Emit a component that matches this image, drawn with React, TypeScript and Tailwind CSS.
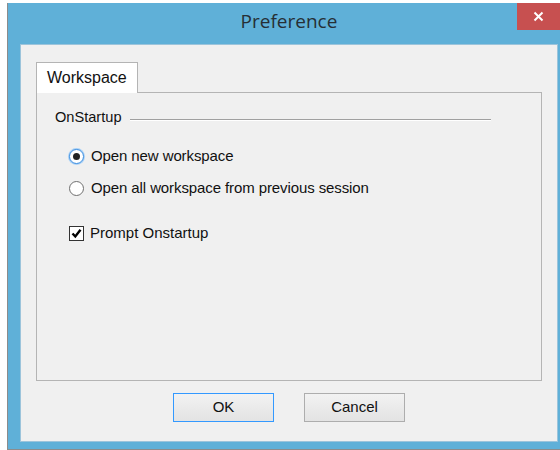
import { useState } from 'react';

const uiFont = { fontFamily: '"Liberation Sans", Arial, sans-serif' };

function Radio({ checked, focused, label, onSelect }: { checked: boolean; focused?: boolean; label: string; onSelect: () => void }) {
  return (
    <label className="flex items-center h-5 cursor-default" onClick={onSelect}>
      <span
        className={
          focused
            ? 'flex items-center justify-center w-[15px] h-[15px] rounded-full border border-[#3d8ee0] bg-white shadow-[0_0_0_1px_#a8d0f5]'
            : 'flex items-center justify-center w-[15px] h-[15px] rounded-full border border-[#6f6f6f] bg-white'
        }
      >
        {checked && <span className="w-[7px] h-[7px] rounded-full bg-[#222]" />}
      </span>
      <span className="ml-[7px] text-[15px] tracking-[-0.1px] text-[#111]">{label}</span>
    </label>
  );
}

function Checkbox({ checked, label, onToggle }: { checked: boolean; label: string; onToggle: () => void }) {
  return (
    <label className="flex items-center h-5 cursor-default" onClick={onToggle}>
      <span className="flex items-center justify-center w-[15px] h-[15px] border border-[#333] bg-white">
        {checked && (
          <svg width="11" height="11" viewBox="0 0 11 11">
            <path d="M1.5 5.5 L4.3 8.5 L9.5 1.8" fill="none" stroke="#000" strokeWidth="2.4" />
          </svg>
        )}
      </span>
      <span className="ml-[6px] text-[15px] text-[#111]">{label}</span>
    </label>
  );
}

export default function App() {
  const [startup, setStartup] = useState<'new' | 'all'>('new');
  const [prompt, setPrompt] = useState(true);

  return (
    <div className="w-[560px] h-[450px] bg-white overflow-hidden" style={uiFont}>
      <div className="ml-[7px] mt-[3px] w-[563px] h-[447px] flex flex-col bg-[#5fb0d8] border-l border-[#8c8c8c] border-b">
        {/* title bar */}
        <div className="relative h-[41px] shrink-0 flex items-center justify-center">
          <span className="text-[19px] text-[#262f35] -mt-[4px]" style={{ fontFamily: '"Open Sans", "Noto Sans", sans-serif' }}>
            Preference
          </span>
          <button className="absolute top-0 right-[10px] w-[43px] h-[27px] bg-[#c75050] flex items-center justify-center">
            <svg width="11" height="11" viewBox="0 0 11 11">
              <path d="M1.5 1.5 L9.5 9.5 M9.5 1.5 L1.5 9.5" stroke="#fff" strokeWidth="2" />
            </svg>
          </button>
        </div>

        {/* client area */}
        <div className="mx-[12px] mb-[7px] flex-1 bg-[#f0f0f0] border border-[#9cc4db] flex flex-col px-[15px] pt-[16px] pb-[17px]">
          <div className="flex">
            <div className="w-[102px] h-[31px] bg-white border border-b-0 border-[#b4b4b4] flex items-center pl-[10px] text-[16px] text-[#111] relative top-[1px]">
              Workspace
            </div>
          </div>
          <div className="h-[289px] border border-[#b4b4b4] bg-[#f0f0f0] pl-[18px] pt-[16px]">
            <div className="flex items-center h-[18px]">
              <span className="text-[14.6px] text-[#111]">OnStartup</span>
              <span className="ml-[8px] w-[361px] border-t border-[#a0a0a0] border-b border-b-white mt-[3px]" />
            </div>
            <div className="pl-[14px] mt-[19px] flex flex-col gap-[12px]">
              <Radio checked={startup === 'new'} focused label="Open new workspace" onSelect={() => setStartup('new')} />
              <Radio checked={startup === 'all'} label="Open all workspace from previous session" onSelect={() => setStartup('all')} />
              <div className="mt-[13px]">
                <Checkbox checked={prompt} label="Prompt Onstartup" onToggle={() => setPrompt(!prompt)} />
              </div>
            </div>
          </div>

          <div className="mt-[12px] flex justify-center gap-[30px]">
            <button className="w-[101px] h-[29px] border border-[#3399ff] bg-gradient-to-b from-[#f2f2f2] to-[#e3e3e3] text-[15px] text-[#111]">
              OK
            </button>
            <button className="w-[101px] h-[29px] border border-[#adadad] bg-gradient-to-b from-[#f2f2f2] to-[#e3e3e3] text-[15px] text-[#111]">
              Cancel
            </button>
          </div>
        </div>
      </div>
    </div>
  );
}
